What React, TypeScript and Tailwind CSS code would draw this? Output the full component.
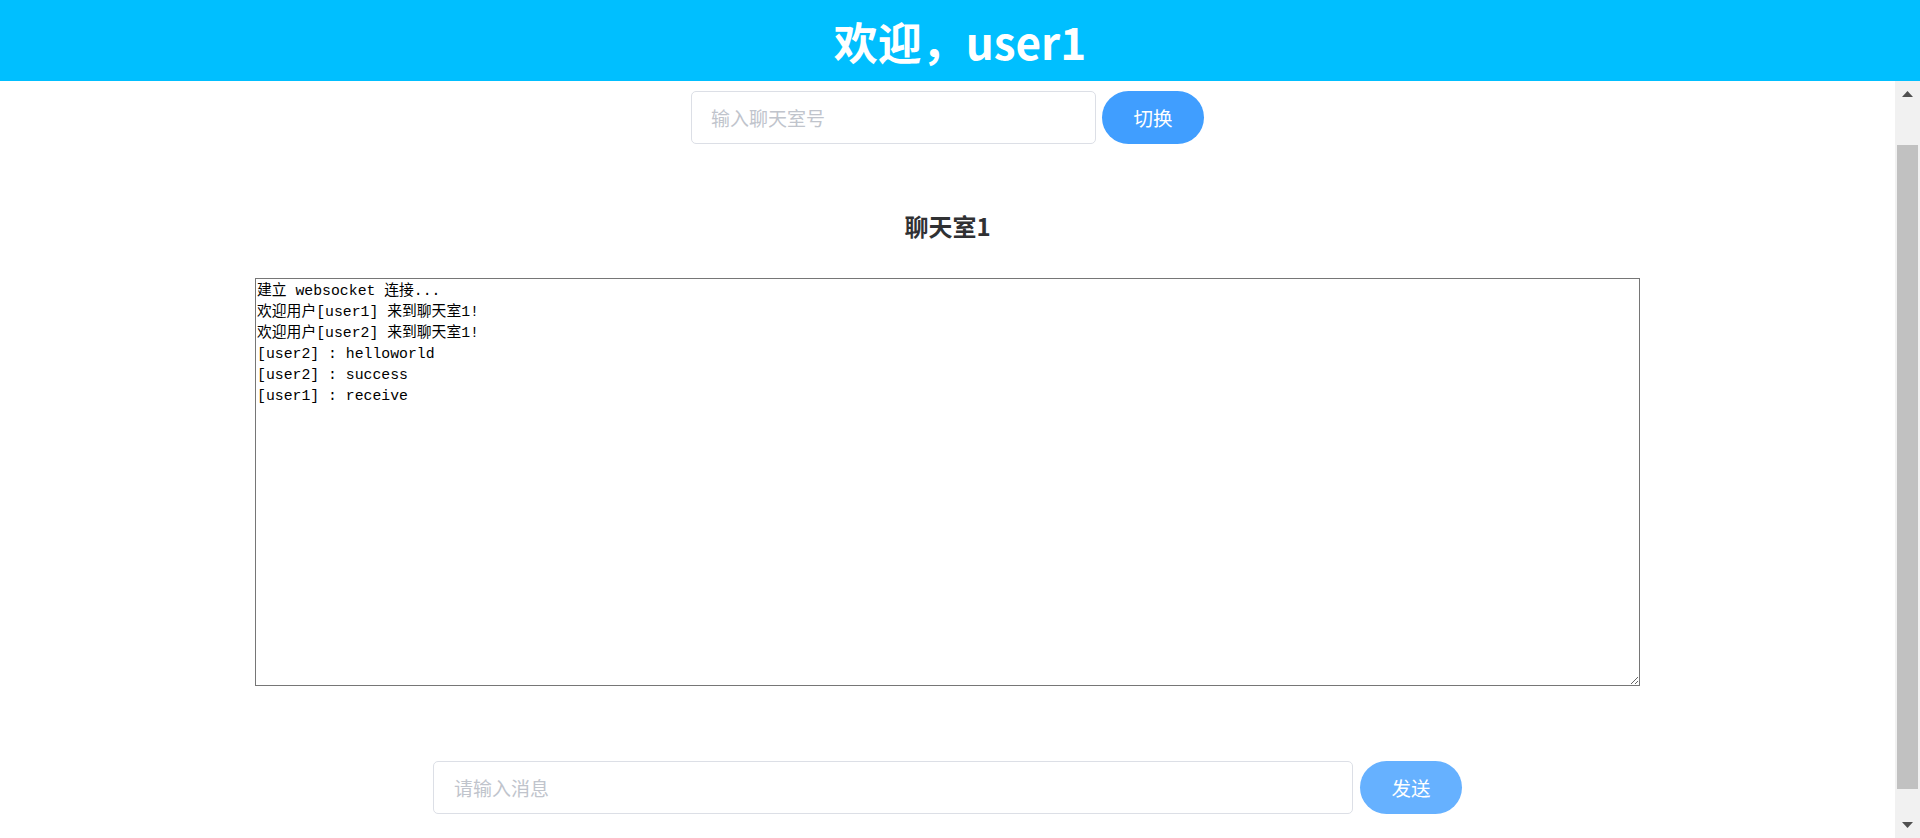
import React from "react";

const log = `建立 websocket 连接...
欢迎用户[user1] 来到聊天室1!
欢迎用户[user2] 来到聊天室1!
[user2] : helloworld
[user2] : success
[user1] : receive`;

export default function App() {
  const sans = { fontFamily: '"Noto Sans CJK SC", "Noto Sans", sans-serif' };
  return (
    <div className="h-screen w-full flex flex-col bg-white overflow-hidden" style={sans}>
      <header className="h-[81px] w-full bg-[#00bfff] flex items-center justify-center shrink-0">
        <h1 className="text-[44px] font-bold text-white leading-none">欢迎，user1</h1>
      </header>
      <div className="flex-1 flex flex-row min-h-0">
        <main className="flex-1 flex flex-col items-center pt-[10px]">
          <div className="flex flex-row items-center gap-[6px]">
            <input
              className="w-[405px] h-[53px] rounded-[5px] border border-[#dcdfe6] px-[19px] text-[19px] text-[#606266] placeholder:text-[#c0c4cc] outline-none bg-white"
              placeholder="输入聊天室号"
            />
            <button className="w-[102px] h-[53px] rounded-full bg-[#409eff] text-white text-[19.5px]">切换</button>
          </div>
          <h3 className="mt-[67px] h-[30px] leading-[30px] text-[24px] font-bold text-[#303133]">聊天室1</h3>
          <textarea
            readOnly
            value={log}
            className="block mt-[37px] w-[1385px] h-[408px] border border-[#767676] px-[1px] py-[2px] text-[14.8px] leading-[21px] text-black outline-none resize"
            style={{ fontFamily: '"Liberation Mono", "Noto Sans CJK SC", monospace' }}
          />
          <div className="mt-[75px] flex flex-row items-center gap-[7px]">
            <input
              className="w-[920px] h-[53px] rounded-[5px] border border-[#dcdfe6] px-[20px] text-[19px] text-[#606266] placeholder:text-[#c0c4cc] outline-none bg-white"
              placeholder="请输入消息"
            />
            <button className="w-[102px] h-[53px] rounded-full bg-[#66b1ff] text-white text-[19.5px]">发送</button>
          </div>
        </main>
        <aside className="w-[25px] shrink-0 bg-[#f1f1f1] flex flex-col">
          <div className="h-[64px] flex justify-center pt-[10px]">
            <svg width="11" height="6" viewBox="0 0 11 6">
              <polygon points="5.5,0 11,6 0,6" fill="#505050" />
            </svg>
          </div>
          <div className="h-[644px] mx-[2px] bg-[#c1c1c1]" />
          <div className="flex-1 flex justify-center items-end pb-[10px]">
            <svg width="11" height="6" viewBox="0 0 11 6">
              <polygon points="0,0 11,0 5.5,6" fill="#505050" />
            </svg>
          </div>
        </aside>
      </div>
    </div>
  );
}
